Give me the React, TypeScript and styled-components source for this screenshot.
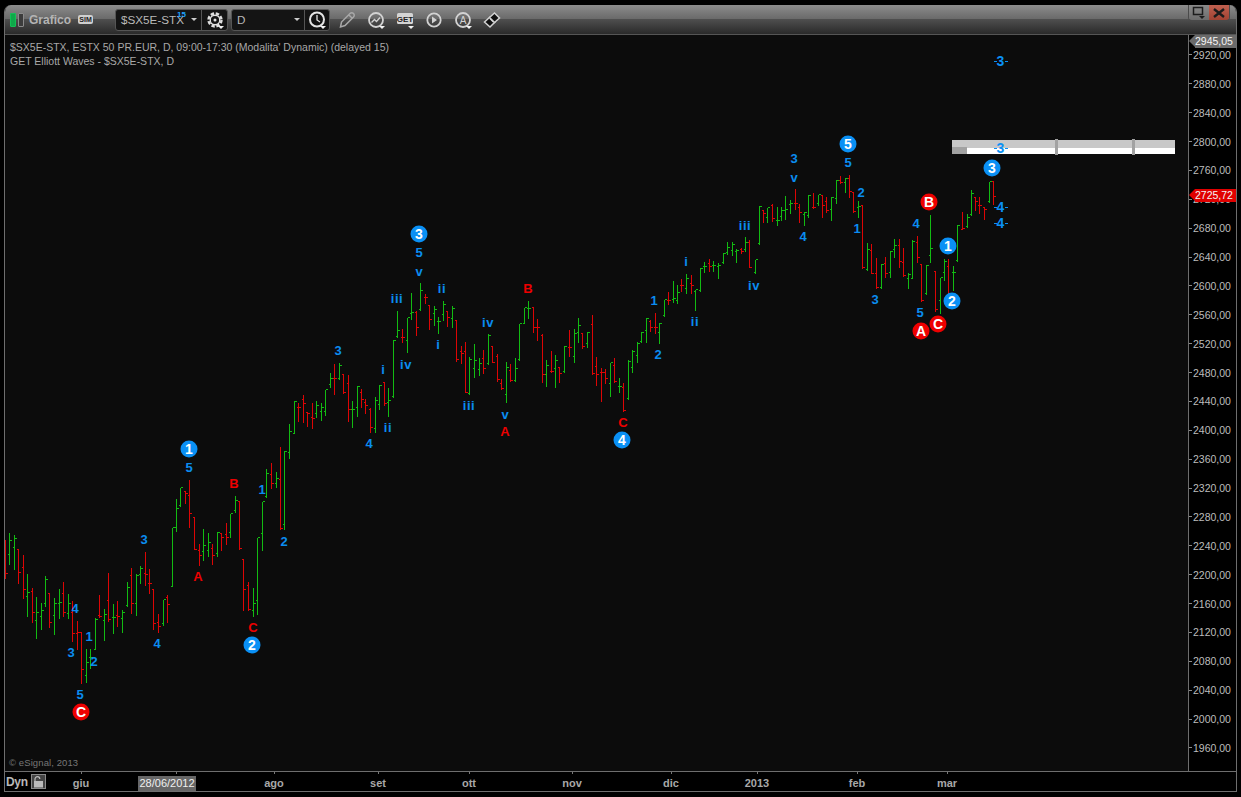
import React from 'react'
import styled, { createGlobalStyle } from 'styled-components'

type Bar = [number, number, number, number, number, 'g' | 'r']

const FONT = `"Liberation Sans", Arial, sans-serif`
const BLUE = '#0a8cf0'
const RED = '#ee0000'

// bars were read off in groups, each with its own origin and a 3x scale
const BAR_GROUPS: { ox: number; oy: number; bars: Bar[] }[] = [
  {
    ox: 0,
    oy: 440,
    bars: [
      [15, 297, 415, 340, 400, 'r'], [28, 277, 373, 343, 300, 'g'], [41, 281, 387, 320, 293, 'g'], [55, 328, 430, 328, 397, 'r'],
      [68, 343, 475, 380, 448, 'r'], [82, 400, 527, 468, 455, 'g'], [95, 442, 545, 452, 517, 'r'], [109, 468, 593, 540, 515, 'g'],
      [122, 487, 567, 528, 510, 'g'], [136, 405, 498, 490, 418, 'g'], [148, 460, 562, 460, 545, 'r'], [163, 472, 582, 525, 490, 'g'],
      [176, 445, 535, 490, 485, 'g'], [190, 423, 527, 460, 515, 'r'], [203, 460, 535, 520, 488, 'g'], [217, 480, 602, 517, 580, 'r'],
      [230, 540, 627, 578, 575, 'r'], [244, 573, 728, 575, 688, 'r'], [257, 625, 725, 705, 665, 'g'], [271, 625, 685, 650, 650, 'g'],
      [284, 530, 628, 628, 538, 'g'], [298, 462, 532, 525, 528, 'r'], [311, 505, 600, 540, 522, 'g'], [325, 396, 542, 480, 538, 'r'],
      [338, 490, 578, 530, 530, 'g'], [352, 480, 558, 525, 528, 'r'], [367, 507, 575, 535, 515, 'g'], [380, 423, 497, 495, 440, 'g'],
      [394, 382, 518, 405, 490, 'r'], [407, 400, 525, 490, 405, 'g'], [421, 375, 430, 403, 385, 'g'], [434, 333, 435, 400, 403, 'r'],
      [448, 383, 460, 428, 430, 'r'], [460, 448, 567, 448, 550, 'r'], [475, 520, 575, 547, 558, 'r'], [488, 477, 555, 548, 478, 'g'],
      [502, 462, 545, 472, 493, 'r'], [515, 262, 437, 437, 262, 'g'], [528, 175, 272, 262, 205, 'g'], [541, 142, 197, 195, 142, 'g'],
      [555, 150, 190, 153, 160, 'r'], [568, 118, 260, 166, 220, 'r'], [582, 230, 326, 232, 326, 'r'], [596, 310, 375, 330, 344, 'r'],
      [610, 265, 360, 333, 314, 'g'], [623, 277, 348, 330, 305, 'g'], [637, 308, 372, 325, 345, 'r'], [650, 274, 347, 338, 275, 'g'],
      [663, 277, 330, 280, 292, 'r'], [677, 247, 312, 283, 292, 'r'], [691, 220, 290, 277, 220, 'g'], [704, 166, 217, 210, 180, 'g'],
      [718, 180, 327, 182, 323, 'r'], [729, 358, 510, 358, 448, 'r'], [745, 423, 510, 435, 508, 'r'], [758, 441, 527, 510, 490, 'g'],
      [772, 292, 522, 480, 292, 'g'], [785, 184, 330, 280, 184, 'g'], [799, 85, 170, 168, 100, 'g'], [813, 67, 143, 103, 130, 'r'],
      [827, 93, 140, 130, 113, 'g'], [841, 18, 268, 118, 265, 'r'], [853, 30, 268, 252, 32, 'g'],
    ],
  },
  {
    ox: 280,
    oy: 220,
    bars: [
      [28, 608, 714, 696, 632, 'g'], [41, 541, 640, 638, 543, 'g'], [55, 545, 603, 560, 560, 'r'], [68, 522, 605, 538, 550, 'r'],
      [82, 572, 618, 575, 580, 'r'], [95, 546, 623, 590, 595, 'r'], [109, 540, 592, 580, 555, 'g'], [122, 546, 600, 573, 562, 'g'],
      [136, 507, 585, 572, 508, 'g'], [149, 457, 500, 493, 475, 'g'], [163, 430, 522, 475, 475, 'r'], [176, 427, 477, 475, 435, 'g'],
      [190, 458, 518, 462, 517, 'r'], [203, 462, 603, 488, 567, 'r'], [217, 540, 620, 568, 568, 'g'], [230, 495, 587, 560, 497, 'g'],
      [244, 505, 562, 517, 538, 'r'], [256, 533, 580, 545, 555, 'r'], [271, 562, 635, 568, 622, 'r'], [284, 528, 635, 625, 541, 'g'],
      [298, 492, 568, 552, 495, 'g'], [311, 484, 555, 487, 550, 'r'], [325, 501, 587, 545, 540, 'g'], [338, 358, 530, 528, 360, 'g'],
      [352, 270, 350, 348, 330, 'g'], [365, 325, 365, 352, 350, 'r'], [380, 290, 396, 360, 290, 'g'], [392, 216, 298, 278, 275, 'g'],
      [407, 270, 345, 276, 322, 'r'], [421, 186, 270, 268, 210, 'g'], [434, 220, 248, 232, 232, 'r'], [448, 255, 327, 256, 298, 'r'],
      [461, 255, 315, 280, 268, 'g'], [475, 288, 340, 303, 303, 'g'], [488, 240, 300, 283, 253, 'g'], [502, 270, 318, 272, 290, 'r'],
      [515, 255, 320, 295, 263, 'g'], [528, 300, 423, 300, 418, 'r'], [542, 376, 430, 392, 400, 'r'], [556, 364, 515, 393, 515, 'r'],
      [568, 408, 522, 520, 418, 'g'], [583, 370, 472, 445, 420, 'g'], [596, 412, 465, 448, 430, 'g'], [610, 388, 458, 415, 445, 'r'],
      [623, 340, 432, 430, 345, 'g'], [636, 376, 426, 377, 425, 'r'], [650, 400, 482, 408, 476, 'r'], [663, 475, 507, 490, 505, 'r'],
      [677, 423, 545, 522, 442, 'g'], [691, 430, 484, 450, 480, 'r'], [704, 412, 482, 480, 445, 'g'], [718, 310, 420, 418, 310, 'g'],
      [731, 260, 310, 308, 262, 'g'], [745, 240, 295, 263, 265, 'g'], [758, 258, 335, 260, 322, 'r'], [772, 295, 360, 322, 322, 'r'],
      [785, 340, 485, 345, 463, 'r'], [799, 418, 497, 462, 435, 'g'], [812, 390, 455, 452, 452, 'r'], [826, 403, 500, 445, 420, 'g'],
      [838, 440, 485, 440, 458, 'r'], [853, 376, 455, 453, 378, 'g'], [868, 328, 408, 380, 380, 'r'], [881, 325, 425, 408, 340, 'g'],
      [895, 292, 365, 335, 315, 'g'],
    ],
  },
  {
    ox: 580,
    oy: 130,
    bars: [
      [7, 610, 653, 610, 648, 'r'], [22, 604, 650, 640, 606, 'g'], [35, 552, 732, 583, 730, 'r'], [49, 678, 765, 708, 733, 'r'],
      [62, 712, 812, 727, 727, 'r'], [76, 715, 760, 727, 745, 'r'], [89, 695, 798, 760, 697, 'g'], [103, 682, 755, 705, 752, 'r'],
      [116, 742, 785, 767, 767, 'g'], [130, 757, 842, 770, 840, 'r'], [143, 688, 806, 805, 692, 'g'], [157, 658, 725, 710, 663, 'g'],
      [170, 633, 697, 675, 640, 'g'], [184, 604, 635, 632, 606, 'g'], [197, 562, 635, 600, 563, 'g'], [210, 567, 603, 574, 590, 'r'],
      [224, 546, 610, 590, 590, 'r'], [238, 577, 638, 605, 580, 'g'], [251, 506, 557, 555, 508, 'g'], [265, 484, 522, 510, 510, 'r'],
      [278, 450, 515, 507, 505, 'g'], [292, 462, 518, 510, 487, 'g'], [304, 445, 482, 465, 465, 'r'], [319, 430, 488, 473, 445, 'g'],
      [332, 433, 488, 460, 465, 'r'], [346, 476, 540, 483, 478, 'g'], [359, 412, 483, 480, 413, 'g'], [373, 393, 425, 408, 408, 'g'],
      [386, 384, 422, 400, 407, 'r'], [400, 391, 422, 406, 405, 'g'], [415, 395, 443, 408, 405, 'g'], [428, 367, 398, 395, 368, 'g'],
      [441, 334, 372, 365, 350, 'g'], [455, 334, 374, 360, 342, 'g'], [469, 355, 395, 362, 360, 'g'], [482, 352, 370, 357, 363, 'r'],
      [496, 318, 362, 358, 335, 'g'], [508, 327, 412, 337, 410, 'r'], [524, 386, 428, 426, 388, 'g'], [536, 226, 342, 340, 227, 'g'],
      [550, 238, 275, 240, 250, 'r'], [562, 230, 276, 262, 232, 'g'], [576, 220, 272, 226, 265, 'r'], [590, 228, 285, 270, 270, 'g'],
      [603, 228, 270, 258, 240, 'g'], [616, 196, 266, 240, 237, 'g'], [630, 208, 250, 222, 218, 'g'], [644, 175, 237, 220, 220, 'r'],
      [658, 218, 276, 230, 245, 'r'], [671, 243, 285, 252, 247, 'g'], [685, 192, 260, 255, 195, 'g'], [699, 185, 235, 230, 232, 'r'],
      [713, 192, 225, 220, 193, 'g'], [725, 195, 262, 195, 225, 'r'], [739, 198, 245, 213, 240, 'r'], [752, 198, 270, 238, 200, 'g'],
      [767, 147, 218, 203, 150, 'g'], [780, 135, 160, 150, 155, 'r'], [794, 140, 187, 155, 145, 'g'], [806, 132, 200, 145, 182, 'r'],
      [820, 187, 245, 187, 244, 'r'], [833, 210, 260, 230, 229, 'g'], [847, 222, 413, 224, 412, 'r'], [861, 336, 420, 418, 357, 'g'],
      [874, 338, 430, 360, 430, 'r'],
    ],
  },
  {
    ox: 840,
    oy: 130,
    bars: [
      [109, 380, 473, 430, 470, 'r'], [122, 400, 473, 470, 403, 'g'], [136, 378, 440, 400, 428, 'r'], [149, 360, 440, 425, 362, 'g'],
      [163, 324, 380, 358, 345, 'g'], [176, 323, 412, 346, 393, 'r'], [190, 352, 437, 395, 435, 'r'], [203, 427, 473, 445, 433, 'g'],
      [217, 327, 445, 443, 333, 'g'], [230, 315, 395, 335, 382, 'r'], [244, 403, 513, 403, 511, 'r'], [257, 403, 492, 490, 404, 'g'],
      [271, 252, 395, 376, 355, 'g'], [284, 423, 543, 424, 538, 'r'], [299, 440, 550, 510, 442, 'g'], [311, 385, 450, 427, 393, 'g'],
      [325, 385, 490, 408, 490, 'r'], [338, 405, 480, 425, 425, 'g'], [352, 283, 392, 390, 285, 'g'], [365, 243, 298, 296, 295, 'r'],
      [380, 250, 290, 287, 262, 'g'], [392, 178, 255, 253, 188, 'g'], [405, 197, 240, 200, 212, 'r'], [418, 198, 248, 225, 225, 'r'],
      [433, 228, 267, 230, 238, 'r'], [446, 153, 215, 213, 154, 'g'], [460, 150, 222, 153, 197, 'r'],
    ],
  },
]

const toPath = (color: 'g' | 'r') =>
  BAR_GROUPS.flatMap(({ ox, oy, bars }) =>
    bars
      .filter(b => b[5] === color)
      .map(([x, top, bottom, open, close]) => {
        const px = Math.round(ox + x / 3) + 0.5
        const y = (v: number) => Math.round(oy + v / 3) + 0.5
        return `M${px} ${y(top)}V${y(bottom)}M${px - 2} ${y(open)}H${px}M${px} ${y(close)}H${px + 2}`
      }),
  ).join('')

const WAVE_LABELS: [string, number, number, string][] = [
  ['5', 189, 467, BLUE], ['5', 80, 694, BLUE], ['3', 71, 652, BLUE], ['4', 75, 608, BLUE], ['1', 89, 636, BLUE], ['2', 94, 661, BLUE],
  ['3', 144, 539, BLUE], ['4', 157, 643, BLUE], ['1', 262, 489, BLUE], ['2', 284, 541, BLUE], ['3', 338, 350, BLUE], ['4', 369, 443, BLUE],
  ['i', 383, 369, BLUE], ['ii', 388, 427, BLUE], ['iii', 397, 298, BLUE], ['iv', 406, 364, BLUE], ['v', 419, 271, BLUE], ['5', 419, 252, BLUE],
  ['ii', 442, 288, BLUE], ['i', 438, 344, BLUE], ['iv', 488, 322, BLUE], ['iii', 469, 405, BLUE], ['v', 505, 414, BLUE], ['1', 654, 300, BLUE],
  ['2', 658, 354, BLUE], ['i', 686, 261, BLUE], ['ii', 695, 321, BLUE], ['iii', 745, 225, BLUE], ['iv', 754, 285, BLUE], ['3', 794, 158, BLUE],
  ['v', 794, 177, BLUE], ['4', 803, 236, BLUE], ['5', 848, 162, BLUE], ['2', 861, 192, BLUE], ['1', 857, 228, BLUE], ['3', 875, 299, BLUE],
  ['4', 916, 223, BLUE], ['5', 920, 312, BLUE],
  ['B', 234, 483, RED], ['A', 198, 576, RED], ['C', 253, 627, RED], ['B', 528, 288, RED], ['A', 505, 431, RED], ['C', 623, 422, RED],
]

const WAVE_BADGES: [string, number, number, string][] = [
  ['1', 189, 449, '#0a90f5'], ['2', 252, 645, '#0a90f5'], ['3', 419, 234, '#0a90f5'], ['4', 622, 440, '#0a90f5'],
  ['5', 848, 144, '#0a90f5'], ['1', 948, 246, '#0a90f5'], ['2', 952, 301, '#0a90f5'], ['3', 992, 168, '#0a90f5'],
  ['C', 81, 712, RED], ['A', 921, 331, RED], ['C', 938, 324, RED], ['B', 929, 202, RED],
]

const TARGETS: [string, number][] = [['3', 61], ['3', 148], ['4', 207], ['4', 223]]

const PRICES = Array.from({ length: 25 }, (_, i) => `${2920 - i * 40},00`)

const MONTHS: { label: string; width: number; current?: boolean }[] = [
  { label: 'giu', width: 62 },
  { label: '28/06/2012', width: 110, current: true },
  { label: 'ago', width: 104 },
  { label: 'set', width: 104 },
  { label: 'ott', width: 78 },
  { label: 'nov', width: 128 },
  { label: 'dic', width: 70 },
  { label: '2013', width: 102 },
  { label: 'feb', width: 98 },
  { label: 'mar', width: 82 },
]

const GlobalStyle = createGlobalStyle`
  html, body {
    margin: 0;
    background: #000;
    font-family: ${FONT};
  }
`

const Win = styled.div`
  box-sizing: border-box;
  width: 1233px;
  height: 787px;
  margin: 5px 0 0 4px;
  display: flex;
  flex-direction: column;
  border: 1px solid #6e6e6e;
  border-top: 0;
  border-radius: 7px 7px 0 0;
  overflow: hidden;
`

const TitleBar = styled.div`
  position: relative;
  box-sizing: border-box;
  height: 30px;
  flex: none;
  display: flex;
  align-items: center;
  padding: 0 0 0 5px;
  border-bottom: 1px solid #555;
  background: linear-gradient(#8c8c8c 0, #6a6a6a 48%, #4e4e4e 50%, #2a2a2a 100%);
`

const Pill = styled.span<{ $on?: boolean }>`
  box-sizing: border-box;
  width: 6px;
  height: 14px;
  margin-right: 2px;
  border-radius: 1px;
  background: ${({ $on }) => ($on ? '#0fa84a' : '#3c3c3c')};
  border: 1px solid ${({ $on }) => ($on ? '#13c055' : '#8a8a8a')};
`

const AppName = styled.span`
  margin-left: 3px;
  width: 49px;
  font-size: 12px;
  font-weight: bold;
  color: #b4b4b4;
`

const SimBadge = styled.span`
  width: 15px;
  height: 9px;
  line-height: 9px;
  border-radius: 2px;
  background: #cfcfcf;
  color: #222;
  font-size: 7px;
  font-weight: bold;
  text-align: center;
`

const ComboGroup = styled.div<{ $gap: number }>`
  display: flex;
  height: 22px;
  margin-left: ${({ $gap }) => $gap}px;
  box-sizing: border-box;
  border: 1px solid #555;
  border-radius: 3px;
  background: #141414;
`

const Combo = styled.div<{ $w: number }>`
  position: relative;
  box-sizing: border-box;
  width: ${({ $w }) => $w}px;
  display: flex;
  align-items: center;
  justify-content: space-between;
  padding: 0 4px 0 5px;
  font-size: 11.7px;
  color: #b9b9b9;
  border-right: 1px solid #555;
`

const Caret = styled.span`
  width: 0;
  height: 0;
  border-left: 3px solid transparent;
  border-right: 3px solid transparent;
  border-top: 3px solid #ccc;
`

const Delay = styled.span`
  position: absolute;
  left: 61px;
  top: 0;
  font-size: 8px;
  font-weight: bold;
  color: #1ea4ff;
`

const ComboButton = styled.div<{ $w: number }>`
  width: ${({ $w }) => $w}px;
  display: flex;
  align-items: center;
  justify-content: center;
`

const Tools = styled.div`
  display: flex;
  align-items: center;
  gap: 9px;
  margin-left: 7px;
`

const ToolIcon = styled.svg`
  display: block;
  width: 20px;
  height: 20px;
`

const WinButtons = styled.div`
  position: absolute;
  top: 0;
  right: 6px;
  display: flex;
  height: 15px;
  border: 1px solid #4a4a4a;
  border-top: 0;
  border-radius: 0 0 4px 4px;
  overflow: hidden;
`

const WinButton = styled.div<{ $close?: boolean }>`
  width: 20px;
  display: flex;
  align-items: center;
  justify-content: center;
  background: ${({ $close }) => ($close ? 'linear-gradient(#c0604f, #a04232)' : 'linear-gradient(#8a8a8a, #6c6c6c)')};
`

const ChartRow = styled.div`
  flex: 1;
  min-height: 0;
  display: flex;
  border-bottom: 1px solid #6e6e6e;
`

const Plot = styled.div`
  position: relative;
  width: 1183px;
  flex: none;
  background: #0c0c0c;
  border-right: 1px solid #6e6e6e;
`

const PlotSvg = styled.svg`
  display: block;
  width: 1183px;
  height: 736px;
  font-family: ${FONT};
`

const Legend = styled.div`
  position: absolute;
  left: 5px;
  top: 5px;
  font-size: 10.5px;
  line-height: 14px;
  color: #a8a8a8;
`

const Copyright = styled.div`
  position: absolute;
  left: 4px;
  bottom: 3px;
  font-size: 9.5px;
  letter-spacing: 0.1px;
  color: #777;
`

const PriceAxis = styled.div`
  position: relative;
  flex: 1;
  padding-top: 5.5px;
  background: #000;
`

const PriceRow = styled.div`
  height: 28.875px;
  display: flex;
  align-items: center;
  font-size: 10.5px;
  color: #bdbdbd;

  &::before {
    content: '';
    width: 3px;
    height: 1px;
    margin-right: 1px;
    background: #8a8a8a;
  }
`

const PriceFlag = styled.div<{ $bg: string; $top: number }>`
  position: absolute;
  top: ${({ $top }) => $top}px;
  left: 6px;
  right: 0;
  height: 13px;
  line-height: 13px;
  font-size: 10.5px;
  color: #f4f4f4;
  background: ${({ $bg }) => $bg};

  &::before {
    content: '';
    position: absolute;
    left: -6px;
    top: 0;
    border-top: 6.5px solid transparent;
    border-bottom: 6.5px solid transparent;
    border-right: 6px solid ${({ $bg }) => $bg};
  }
`

const TimeAxis = styled.div`
  height: 19px;
  flex: none;
  display: flex;
  align-items: center;
  background: #000;
`

const DynBlock = styled.div`
  width: 45px;
  flex: none;
  display: flex;
  align-items: center;
  gap: 3px;
  padding-left: 1px;
  box-sizing: border-box;
  font-size: 12px;
  font-weight: bold;
  letter-spacing: -0.3px;
  color: #b9b9b9;
`

const LockBox = styled.span`
  width: 15px;
  height: 15px;
  box-sizing: border-box;
  display: flex;
  align-items: center;
  justify-content: center;
  border: 1px solid #8a8a8a;
  background: #444;
`

const MonthCell = styled.div<{ $w: number; $current?: boolean }>`
  position: relative;
  box-sizing: border-box;
  width: ${({ $w }) => $w}px;
  height: 19px;
  padding-top: 3px;
  flex: none;
  display: flex;
  align-items: center;
  justify-content: center;
  font-size: 11px;
  font-weight: bold;
  color: #a8a8a8;

  &::before {
    content: '';
    position: absolute;
    top: 0;
    left: ${({ $current }) => ($current ? 'calc(50% + 9px)' : '50%')};
    width: 1px;
    height: 2px;
    background: #777;
  }
`

const CurrentDate = styled.span`
  width: 58px;
  height: 15px;
  margin-top: 1px;
  line-height: 15px;
  text-align: center;
  background: #666;
  color: #f0f0f0;
  font-weight: normal;
`

const Dropped = () => <path d="M13 16h6l-3 3z" fill="#f2f2f2" />

const GearIcon = () => (
  <ToolIcon viewBox="0 0 20 20">
    <circle cx="10" cy="10" r="6.5" fill="none" stroke="#e0e0e0" strokeWidth="2.4" strokeDasharray="3.4 1.7" />
    <circle cx="10" cy="10" r="4.8" fill="none" stroke="#e0e0e0" strokeWidth="1.4" />
    <circle cx="10" cy="10" r="1.5" fill="#e0e0e0" />
    <Dropped />
  </ToolIcon>
)

const ClockIcon = () => (
  <ToolIcon viewBox="0 0 20 20">
    <circle cx="10" cy="9.5" r="7" fill="none" stroke="#e4e4e4" strokeWidth="2" />
    <path d="M10 5v5l3 2" fill="none" stroke="#e4e4e4" strokeWidth="1.3" />
    <Dropped />
  </ToolIcon>
)

const PencilIcon = () => (
  <ToolIcon viewBox="0 0 20 20">
    <path d="M3.5 17l1-5L13 3.5a2 2 0 0 1 3.5 3.5L8 15.5zM12 5l3 3" fill="none" stroke="#a8a8a8" strokeWidth="1.5" />
  </ToolIcon>
)

const StudyIcon = () => (
  <ToolIcon viewBox="0 0 20 20">
    <circle cx="10" cy="10" r="7" fill="none" stroke="#d2d2d2" strokeWidth="1.8" />
    <path d="M5.5 12.5l3-3 2 2 3.5-4" fill="none" stroke="#d2d2d2" strokeWidth="1.4" />
    <Dropped />
  </ToolIcon>
)

const GetIcon = () => (
  <ToolIcon viewBox="0 0 20 20">
    <rect x="2" y="3" width="16" height="11" rx="1.5" fill="#d4d4d4" />
    <text x="10" y="12" textAnchor="middle" fontSize="8" fontWeight="bold" fontFamily={FONT} fill="#222">
      GET
    </text>
    <Dropped />
  </ToolIcon>
)

const PlayIcon = () => (
  <ToolIcon viewBox="0 0 20 20">
    <circle cx="10" cy="10" r="6.7" fill="none" stroke="#d2d2d2" strokeWidth="1.8" />
    <path d="M8 6.5l5 3.5-5 3.5z" fill="#d2d2d2" />
  </ToolIcon>
)

const AutoIcon = () => (
  <ToolIcon viewBox="0 0 20 20">
    <circle cx="10" cy="10" r="7" fill="none" stroke="#d2d2d2" strokeWidth="1.8" />
    <text x="10" y="13.5" textAnchor="middle" fontSize="10" fontFamily={FONT} fill="#d2d2d2">
      A
    </text>
    <Dropped />
  </ToolIcon>
)

const LinkIcon = () => (
  <ToolIcon viewBox="0 0 20 20">
    <path d="M2.5 12l5.5-5 5 5-5 5z" fill="#111" stroke="#d2d2d2" strokeWidth="1.5" />
    <path d="M7.5 7.5l5-4.5 5 5-5 4.5z" fill="#111" stroke="#d2d2d2" strokeWidth="1.5" />
    <path d="M8 8.5l3.5 3.5" stroke="#d2d2d2" strokeWidth="1.5" />
  </ToolIcon>
)

const RestoreIcon = () => (
  <svg width="14" height="13" viewBox="0 0 14 13">
    <path d="M1.5 1.5h9v7h-9z" fill="none" stroke="#1c1c1c" strokeWidth="1.5" />
    <path d="M7 10h6l-3 3z" fill="#1c1c1c" />
  </svg>
)

const CloseIcon = () => (
  <svg width="12" height="10" viewBox="0 0 12 10">
    <path d="M1 1l10 8M11 1L1 9" stroke="#1c1c1c" strokeWidth="2.4" />
  </svg>
)

const LockIcon = () => (
  <svg width="11" height="12" viewBox="0 0 11 12">
    <path d="M2 5V3a2.4 2.4 0 0 1 4.8 0" fill="none" stroke="#bbb" strokeWidth="1.2" />
    <rect x="1" y="5" width="9" height="6.5" fill="#bbb" />
  </svg>
)

const Chart = () => (
  <PlotSvg viewBox="5 35 1183 736">
    <rect x="952" y="140" width="223" height="8" fill="#c8c8c8" />
    <rect x="952" y="148" width="223" height="6" fill="#fff" />
    <rect x="952" y="147" width="15" height="7" fill="#a2a2a2" />
    <rect x="1055" y="139" width="3" height="16" fill="#a2a2a2" />
    <rect x="1132" y="139" width="3" height="16" fill="#a2a2a2" />

    <path d={toPath('g')} stroke="#12bb12" fill="none" shapeRendering="crispEdges" />
    <path d={toPath('r')} stroke="#dd0505" fill="none" shapeRendering="crispEdges" />

    <g fontSize="13" fontWeight="bold" textAnchor="middle" dominantBaseline="central">
      {WAVE_LABELS.map(([text, x, y, fill]) => (
        <text key={`${text}-${x}-${y}`} x={x} y={y} fill={fill} letterSpacing={text.length > 1 ? 0.6 : 0}>
          {text}
        </text>
      ))}
      {WAVE_BADGES.map(([text, x, y, fill]) => (
        <g key={`${text}-${x}-${y}`}>
          <circle cx={x} cy={y} r="8.5" fill={fill} />
          <text x={x} y={y} fill="#fff" fontSize="14">
            {text}
          </text>
        </g>
      ))}
      {TARGETS.map(([digit, y]) => (
        <g key={y}>
          <path d={`M994 ${y + 0.5}h3M1005 ${y + 0.5}h3`} stroke="#0a90f5" shapeRendering="crispEdges" />
          <text x={1000.5} y={y} fill="#0a90f5" fontSize="14">
            {digit}
          </text>
        </g>
      ))}
    </g>
  </PlotSvg>
)

export default function App() {
  return (
    <>
      <GlobalStyle />
      <Win>
        <TitleBar>
          <Pill $on />
          <Pill />
          <AppName>Grafico</AppName>
          <SimBadge>SIM</SimBadge>
          <ComboGroup $gap={22}>
            <Combo $w={86}>
              $SX5E-STX
              <Delay>15</Delay>
              <Caret />
            </Combo>
            <ComboButton $w={25}>
              <GearIcon />
            </ComboButton>
          </ComboGroup>
          <ComboGroup $gap={3}>
            <Combo $w={73}>
              D
              <Caret />
            </Combo>
            <ComboButton $w={24}>
              <ClockIcon />
            </ComboButton>
          </ComboGroup>
          <Tools>
            <PencilIcon />
            <StudyIcon />
            <GetIcon />
            <PlayIcon />
            <AutoIcon />
            <LinkIcon />
          </Tools>
          <WinButtons>
            <WinButton>
              <RestoreIcon />
            </WinButton>
            <WinButton $close>
              <CloseIcon />
            </WinButton>
          </WinButtons>
        </TitleBar>
        <ChartRow>
          <Plot>
            <Chart />
            <Legend>
              <div>$SX5E-STX, ESTX 50 PR.EUR, D, 09:00-17:30 (Modalita' Dynamic) (delayed 15)</div>
              <div>GET Elliott Waves - $SX5E-STX, D</div>
            </Legend>
            <Copyright>© eSignal, 2013</Copyright>
          </Plot>
          <PriceAxis>
            {PRICES.map(price => (
              <PriceRow key={price}>{price}</PriceRow>
            ))}
            <PriceFlag $bg="#6a6a6a" $top={0}>
              2945,05
            </PriceFlag>
            <PriceFlag $bg="#e00000" $top={154}>
              2725,72
            </PriceFlag>
          </PriceAxis>
        </ChartRow>
        <TimeAxis>
          <DynBlock>
            Dyn
            <LockBox>
              <LockIcon />
            </LockBox>
          </DynBlock>
          {MONTHS.map(({ label, width, current }) => (
            <MonthCell key={label} $w={width} $current={current}>
              {current ? <CurrentDate>{label}</CurrentDate> : label}
            </MonthCell>
          ))}
        </TimeAxis>
      </Win>
    </>
  )
}
